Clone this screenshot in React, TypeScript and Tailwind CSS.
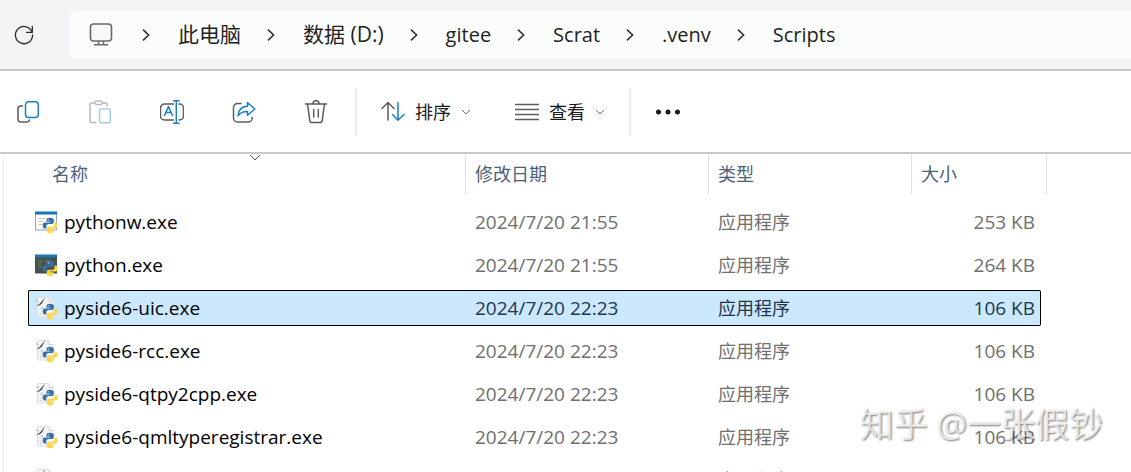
import type { ReactNode } from "react";

type FileKind = "window" | "console" | "script";

type FileRow = {
  name: string;
  kind: FileKind;
  modified: string;
  type: string;
  size: string;
  selected?: boolean;
};

const crumbs = [
  { label: "此电脑", size: "text-[21px]" },
  { label: "数据 (D:)", size: "text-[21px]" },
  { label: "gitee", size: "text-xl" },
  { label: "Scrat", size: "text-xl" },
  { label: ".venv", size: "text-xl" },
  { label: "Scripts", size: "text-xl" },
];

const files: FileRow[] = [
  { name: "pythonw.exe", kind: "window", modified: "2024/7/20 21:55", type: "应用程序", size: "253 KB" },
  { name: "python.exe", kind: "console", modified: "2024/7/20 21:55", type: "应用程序", size: "264 KB" },
  { name: "pyside6-uic.exe", kind: "script", modified: "2024/7/20 22:23", type: "应用程序", size: "106 KB", selected: true },
  { name: "pyside6-rcc.exe", kind: "script", modified: "2024/7/20 22:23", type: "应用程序", size: "106 KB" },
  { name: "pyside6-qtpy2cpp.exe", kind: "script", modified: "2024/7/20 22:23", type: "应用程序", size: "106 KB" },
  { name: "pyside6-qmltyperegistrar.exe", kind: "script", modified: "2024/7/20 22:23", type: "应用程序", size: "106 KB" },
  { name: "", kind: "script", modified: "", type: "应用程序", size: "" },
];

function Icon({ children }: { children: ReactNode }) {
  return (
    <svg
      viewBox="0 0 24 24"
      className="size-6 shrink-0"
      fill="none"
      stroke="#5c5c5c"
      strokeWidth="1.5"
      strokeLinecap="round"
      strokeLinejoin="round"
      aria-hidden="true"
    >
      {children}
    </svg>
  );
}

function ChevronDown() {
  return (
    <svg viewBox="0 0 10 6" className="h-[6px] w-[10px] shrink-0" fill="none" stroke="#777" aria-hidden="true">
      <path d="M1 1l4 4 4-4" />
    </svg>
  );
}

function CrumbChevron() {
  return (
    <svg viewBox="0 0 8 12" className="h-3 w-2 shrink-0" fill="none" stroke="#333" strokeWidth="1.6" aria-hidden="true">
      <path d="M1 .6L6.600 6 1 11.400" />
    </svg>
  );
}

function FileIcon({ kind }: { kind: FileKind }) {
  return (
    <svg viewBox="0 0 24 24" className="size-6 shrink-0" aria-hidden="true">
      {kind === "window" && (
        <>
          <rect x="1.5" y="2.5" width="21" height="17.5" fill="#f8fafc" stroke="#8fa9bf" />
          <rect x="1" y="1.500" width="22" height="3" fill="#1b78b4" />
          <path d="M4 8.500h7M4 11.500h5M4 14.500h6" stroke="#d3c6b6" />
          <path d="M12.500 8.500h6" stroke="#c5d3e2" />
        </>
      )}
      {kind === "console" && (
        <>
          <rect x="1" y="2" width="22" height="18.500" fill="#46504f" />
          <rect x="1" y="1.500" width="22" height="3" fill="#1b78b4" />
          <path d="M3.500 8h6M11 8h7M3.500 11h4M3.500 14h5" stroke="#66805f" strokeWidth="1.200" />
        </>
      )}
      {kind === "script" && (
        <>
          <path d="M3.500 1.500h11.500l4 4V21H3.500z" fill="#f3f4f5" stroke="#dcdfe1" />
          <path d="M15 1.500v4h4" fill="#fff" stroke="#d2d5d8" />
          <path d="M5.500 13h4M5.500 16h3M5.500 18.500h3" stroke="#d6d6d6" />
          <path d="M2 9.500l3.200-1.300L11 1.600 8 7.600 5.500 9.400z" fill="#4a4d50" />
          <path d="M2 4.500l2.500 1.500M7.500 10.500l.8 2" stroke="#a8abad" />
        </>
      )}
      <g transform="translate(8.500 7.500)">
        <path
          d="M7.200.3C4.600.3 4 1.500 4 2.600v1.700h3.800v.7H2.300C1 5 .2 6.200.2 8s.9 3 2.200 3h1.400V9c0-1.400 1-2.400 2.400-2.400h3.100c1.200 0 2-.8 2-2V2.600C11.300 1.200 10 .3 7.200.3z"
          fill="#3672a8"
        />
        <path
          d="M8.100 15.700c2.600 0 3.200-1.200 3.200-2.300v-1.700H7.500v-.7H13c1.300 0 2.100-1.200 2.100-3s-.9-3-2.200-3h-.9v2c0 1.400-1 2.300-2.400 2.300H6.300c-1.200 0-2 .8-2 2v2.100c0 1.400 1.100 2.300 3.800 2.300z"
          fill="#fbd645"
        />
        <circle cx="5.800" cy="2.300" r=".6" fill="#fff" />
        <circle cx="9.500" cy="13.700" r=".6" fill="#fff" />
      </g>
    </svg>
  );
}

function AddressBar() {
  return (
    <header className="flex h-[71px] shrink-0 items-center border-b-2 border-[#c8c8c8] bg-[#f3f4f6]">
      <button type="button" aria-label="刷新" className="flex w-[69px] shrink-0 pl-3">
        <Icon>
          <path d="M20.200 9.500A8.600 8.600 0 1 0 20.600 12" stroke="#2b2b2b" strokeWidth="1.300" />
          <path d="M20.300 3.300v6h-5.800" stroke="#2b2b2b" strokeWidth="1.300" />
        </Icon>
      </button>
      <nav
        aria-label="路径"
        className="flex h-12 min-w-0 flex-1 items-center gap-[26px] rounded-l-lg bg-[#fbfdfc] pl-5 text-[#1f1f1f]"
      >
        <svg viewBox="0 0 24 24" className="mr-[3px] size-6 shrink-0" fill="none" stroke="#6a6a6a" strokeWidth="1.600" aria-hidden="true">
          <rect x="1.500" y="1" width="21" height="17" rx="3" fill="#f7f8f8" />
          <path d="M9.500 18v3.500M14.500 18v3.500M5 21.700h14" />
        </svg>
        {crumbs.map((crumb) => (
          <div key={crumb.label} className="flex shrink-0 items-center gap-7 pt-px">
            <CrumbChevron />
            <a href="#" className={`whitespace-nowrap ${crumb.size}`}>
              {crumb.label}
            </a>
          </div>
        ))}
      </nav>
    </header>
  );
}

function ToolButton({ label, children }: { label: string; children: ReactNode }) {
  return (
    <button type="button" aria-label={label} className="flex size-12 shrink-0 items-center justify-center">
      <Icon>{children}</Icon>
    </button>
  );
}

function Toolbar() {
  return (
    <div className="flex h-[83px] shrink-0 items-center border-b-2 border-[#c8c8c8] bg-white pl-1 text-lg text-[#1a1a1a]">
      <div className="flex gap-6 pr-[15px]">
        <ToolButton label="复制">
          <path d="M6.500 6H5a3 3 0 0 0-3 3v10a3 3 0 0 0 3 3h5.500a3 3 0 0 0 3-2" />
          <rect x="9.500" y="1.800" width="12.800" height="15.700" rx="3" stroke="#1b7fc4" />
        </ToolButton>
        <ToolButton label="粘贴">
          <g stroke="#b9b9b9">
            <path d="M6.500 3H3.200C2.500 3 2 3.500 2 4.200v17c0 .7.500 1.200 1.200 1.200H8M14.500 3h3.300c.7 0 1.200.5 1.200 1.200V6" />
            <rect x="6.800" y="1" width="7.500" height="3.500" rx="1.700" />
          </g>
          <rect x="11.500" y="9" width="10.800" height="13.800" rx="1.500" stroke="#a5cbe6" />
        </ToolButton>
        <ToolButton label="重命名">
          <path d="M13.500 4H4.500a4 4 0 0 0-4 4v8a4 4 0 0 0 4 4h9M19 4h.5a4 4 0 0 1 4 4v8a4 4 0 0 1-4 4H19" />
          <path d="M4.500 15.500L8.500 6.500l4 9M6 12.500h5M13.500.8h5.500M13.500 23.200h5.500M16.300.8v22.400" stroke="#1b7fc4" />
        </ToolButton>
        <ToolButton label="共享">
          <path d="M9 3.500H5.500a4 4 0 0 0-4 4V18a4 4 0 0 0 4 4h10.800a4 4 0 0 0 4-4v-.5" />
          <path d="M15.500 2.500l7.300 6.500-7.300 6.200v-3.700c-4.200-.2-7 1-9.500 4.300.3-5.800 3.500-9.300 9.500-9.600z" stroke="#1b7fc4" />
        </ToolButton>
        <ToolButton label="删除">
          <path d="M1.500 4h21M3.500 4l2.300 16.300a2.500 2.500 0 0 0 2.500 2.200h7.400a2.500 2.500 0 0 0 2.500-2.200L20.500 4M9 3.800a3 3 0 0 1 6 0M9.700 9.500v7.500M14.300 9.500v7.500" />
        </ToolButton>
      </div>
      <div className="h-12 w-[2px] shrink-0 bg-[#ececec]" />
      <button type="button" className="ml-6 flex shrink-0 items-center gap-[10px]">
        <Icon>
          <path d="M7 20V2.500M1 8.500l6-6 6 6" />
          <path d="M17 2.500V20M11.500 14.500l5.500 5.700 6-5.700" stroke="#1b7fc4" />
        </Icon>
        排序
        <ChevronDown />
      </button>
      <button type="button" className="ml-11 flex shrink-0 items-center gap-[10px]">
        <Icon>
          <path d="M0 4.500h24M0 9.500h24M0 14.500h24M0 19.500h24" strokeLinecap="butt" />
        </Icon>
        查看
        <ChevronDown />
      </button>
      <div className="ml-6 h-12 w-[2px] shrink-0 bg-[#ececec]" />
      <button type="button" aria-label="更多" className="ml-6 shrink-0">
        <svg viewBox="0 0 26 6" className="h-[6px] w-[26px]" fill="#1a1a1a" aria-hidden="true">
          <circle cx="3.500" cy="3" r="2.500" />
          <circle cx="13" cy="3" r="2.500" />
          <circle cx="22.500" cy="3" r="2.500" />
        </svg>
      </button>
    </div>
  );
}

function FileTable() {
  return (
    <table className="-mt-[7px] w-full table-fixed border-separate border-spacing-x-0 border-spacing-y-[7px] text-lg leading-6">
      <colgroup>
        <col />
        <col className="w-[243px]" />
        <col className="w-[203px]" />
        <col className="w-[130px]" />
        <col className="w-[6px]" />
      </colgroup>
      <thead>
        <tr className="h-[43px] text-left align-top text-[#4c607a]">
          <th className="relative p-0 font-normal">
            <div className="h-10 pt-2 pl-6">名称</div>
            <svg
              viewBox="0 0 12 7"
              className="absolute top-0 right-0 left-4 mx-auto h-[7px] w-3"
              fill="none"
              stroke="#555"
              aria-hidden="true"
            >
              <path d="M1 1l5 5 5-5" />
            </svg>
          </th>
          <th className="p-0 font-normal">
            <div className="h-10 border-l border-[#e2e2e2] pt-2 pl-[9px]">修改日期</div>
          </th>
          <th className="p-0 font-normal">
            <div className="h-10 border-l border-[#e2e2e2] pt-2 pl-[9px]">类型</div>
          </th>
          <th colSpan={2} className="p-0 font-normal">
            <div className="h-10 border-x border-[#e2e2e2] pt-2 pl-[9px]">大小</div>
          </th>
        </tr>
      </thead>
      <tbody>
        {files.map((file, index) => (
          <tr
            key={index}
            className={
              file.selected
                ? "h-9 text-[#22364a] *:border-y *:border-black *:bg-[#cce8ff]"
                : "h-9 text-[#6f6f6f] *:border-y *:border-transparent"
            }
          >
            <td className="rounded-l-xs border-l p-0 pl-[5px] text-[19px] text-black">
              <div className="flex items-center gap-[6px]">
                <FileIcon kind={file.kind} />
                <span className="truncate">{file.name}</span>
              </div>
            </td>
            <td className="p-0 pl-[10px] text-[19px]">{file.modified}</td>
            <td className="p-0 pl-[10px]">{file.type}</td>
            <td className="rounded-r-xs border-r p-0 pr-[5px] text-right text-[19px]">{file.size}</td>
          </tr>
        ))}
      </tbody>
    </table>
  );
}

export default function App() {
  return (
    <div className="relative flex h-screen flex-col overflow-hidden bg-white font-[Open_Sans,Noto_Sans_CJK_SC,sans-serif]">
      <AddressBar />
      <Toolbar />
      <main className="ml-[3px] min-h-0 flex-1 overflow-hidden border-l border-[#ececec] pr-[84px] pl-6">
        <FileTable />
      </main>
      <div className="pointer-events-none absolute right-7 bottom-7 text-[34px] leading-10 whitespace-nowrap text-white/70 [text-shadow:1px_1px_2px_#00000080]">
        知乎 @一张假钞
      </div>
    </div>
  );
}
